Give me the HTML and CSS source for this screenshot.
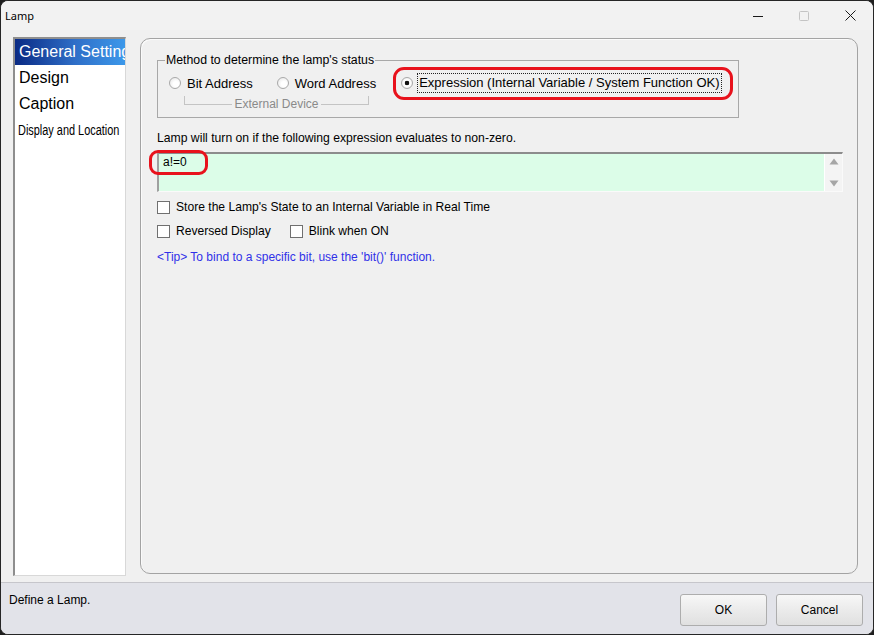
FILE: index.html
```html
<!DOCTYPE html>
<html>
<head>
<meta charset="utf-8">
<title>Lamp</title>
<link rel="stylesheet" href="styles.css">
</head>
<body>
<div class="window">
  <div class="titlebar">
    <span class="title">Lamp</span>
    <div class="controls">
      <span class="ctl"><svg width="10" height="10" viewBox="0 0 10 10"><path d="M0 5.5H10" stroke="#1a1a1a" stroke-width="1"/></svg></span>
      <span class="ctl"><svg width="10" height="10" viewBox="0 0 10 10"><rect x="0.5" y="0.5" width="9" height="9" rx="1" fill="none" stroke="#c4c4c4" stroke-width="1"/></svg></span>
      <span class="ctl"><svg width="11" height="11" viewBox="0 0 11 11"><path d="M0.5 0.5L10.5 10.5M10.5 0.5L0.5 10.5" stroke="#1a1a1a" stroke-width="1"/></svg></span>
    </div>
  </div>
  <div class="content">
    <ul class="sidebar">
      <li class="item selected">General Setting</li>
      <li class="item">Design</li>
      <li class="item">Caption</li>
      <li class="item narrow"><span class="squeeze">Display and Location</span></li>
    </ul>
    <div class="panel">
      <div class="group">
        <span class="legend">Method to determine the lamp's status</span>
        <div class="radios">
          <label class="radio"><span class="dot"></span>Bit Address</label>
          <label class="radio r2"><span class="dot"></span>Word Address</label>
          <label class="radio r3"><span class="dot checked"></span><span class="focus">Expression (Internal Variable / System Function OK)</span></label>
        </div>
        <div class="bracket"><span class="bl"></span><span class="btext">External Device</span><span class="br"></span></div>
      </div>
      <p class="hint">Lamp will turn on if the following expression evaluates to non-zero.</p>
      <div class="expr">
        <div class="expr-text"><span class="code">a!=0</span></div>
        <div class="vscroll">
          <svg width="10" height="7" viewBox="0 0 10 7"><path d="M5 0.5L9.5 6.5H0.5Z" fill="#a6a6a6"/></svg>
          <svg width="10" height="7" viewBox="0 0 10 7"><path d="M0.5 0.5H9.5L5 6.5Z" fill="#a6a6a6"/></svg>
        </div>
      </div>
      <div class="check-row first">
        <label class="check"><span class="box"></span>Store the Lamp's State to an Internal Variable in Real Time</label>
      </div>
      <div class="check-row">
        <label class="check"><span class="box"></span>Reversed Display</label>
        <label class="check c2"><span class="box"></span>Blink when ON</label>
      </div>
      <p class="tip">&lt;Tip&gt; To bind to a specific bit, use the 'bit()' function.</p>
    </div>
  </div>
  <div class="statusbar">
    <span class="status">Define a Lamp.</span>
    <div class="buttons">
      <button class="btn">OK</button>
      <button class="btn">Cancel</button>
    </div>
  </div>
</div>
</body>
</html>
```
FILE: styles.css
```css
*, *::before, *::after { box-sizing: border-box; }
html, body { margin: 0; padding: 0; background: #1e1e1e; }
body { width: 874px; height: 635px; overflow: hidden; }

.window {
  width: 874px; height: 635px;
  border: 1px solid #262626;
  border-radius: 8px;
  background: #f0f0f0;
  display: flex; flex-direction: column;
  overflow: hidden;
  font-family: "Liberation Sans", Arial, sans-serif;
  font-size: 12px;
  color: #000;
}

.titlebar { height: 29px; flex: none; display: flex; align-items: center; background: #f2f2f2; }
.title { font-family: "Noto Sans", sans-serif; font-size: 11px; padding-left: 4px; padding-bottom: 1px; color: #000; }
.controls { margin-left: auto; display: flex; height: 29px; }
.ctl { width: 46px; display: flex; align-items: center; justify-content: center; }

.content { flex: 1; display: flex; align-items: flex-start; padding: 7px 15px 0 12px; }

.sidebar {
  list-style: none; margin: 0; padding: 0;
  width: 113px; height: 539px; flex: none;
  background: #fff;
  border-top: 2px solid #8e8e8e; border-left: 2px solid #8e8e8e;
  border-right: 1px solid #d8d8d8; border-bottom: 1px solid #d8d8d8;
  overflow: hidden;
}
.item { height: 26px; line-height: 26px; font-size: 16px; padding-left: 4px; white-space: nowrap; color: #000; }
.item.selected { background: linear-gradient(to right, #0a2a84, #2f6fc8 55%, #3c98ea); color: #fff; }
.item.narrow { font-size: 14px; padding-left: 3px; }
.squeeze { display: inline-block; transform: scaleX(0.78); transform-origin: left center; }

.panel {
  flex: none; margin-left: 14px; margin-top: 1px;
  width: 718px; height: 536px;
  border: 1px solid #a3a3a3; border-radius: 10px;
  box-shadow: inset 1px 1px 0 #fafafa;
  padding: 21px 15px 0 16px;
}

.group {
  position: relative; width: 582px;
  border: 1px solid #a8a8a8;
  padding: 12px 0 5px 11px;
}
.legend {
  position: absolute; left: 7px; top: -8px;
  line-height: 15px; padding: 0 1px; background: #f0f0f0;
  font-size: 12.3px;
}
.radios { display: flex; align-items: center; height: 20px; font-size: 13px; }
.radio { display: flex; align-items: center; gap: 6px; }
.r2 { margin-left: 24px; }
.r3 { margin-left: 25px; gap: 4px; position: relative; }
.r3::after {
  content: ""; position: absolute; left: -8px; right: -11px; top: -6px; bottom: -7px;
  border: 3px solid #e8121c; border-radius: 11px;
}
.dot {
  width: 12px; height: 12px; border-radius: 50%;
  border: 1px solid #a9a9a9;
  background: radial-gradient(circle at 60% 60%, #ffffff 30%, #e2e2e2 100%);
  flex: none;
}
.dot.checked { background: radial-gradient(circle, #111 0 2px, #fff 2.6px, #fff 45%, #e2e2e2 100%); }
.focus { border: 1px dotted #222; line-height: 18px; padding: 0 1px; }

.bracket { display: flex; align-items: flex-start; margin: 3px 0 0 15px; width: 185px; height: 16px; }
.bl, .br { flex: 1; height: 9px; border-bottom: 1px solid #c4c4c4; }
.bl { border-left: 1px solid #c4c4c4; }
.br { border-right: 1px solid #c4c4c4; }
.btext { color: #8a8a8a; line-height: 17px; padding: 0 2px; }

.hint { margin: 13px 0 0; line-height: 14px; font-size: 12.2px; }

.expr {
  display: flex; margin-top: 7px;
  width: 686px; height: 40px;
  background: #dcfde8;
  border-top: 2px solid #8c8c8c; border-left: 2px solid #a0a0a0;
  border-right: 1px solid #fafafa; border-bottom: 1px solid #fafafa;
}
.expr-text { flex: 1; padding: 1px 4px; }
.code { position: relative; display: inline-block; vertical-align: top; line-height: 14px; font-size: 12px; }
.code::after {
  content: ""; position: absolute; left: -14px; top: -5px; width: 59px; height: 25px;
  border: 3px solid #e8121c; border-radius: 9px;
}
.vscroll {
  width: 18px; flex: none; background: #f4f4f4; border-left: 1px solid #ffffff;
  display: flex; flex-direction: column; align-items: center; justify-content: space-between;
  padding: 4px 0 4px;
}

.check-row { display: flex; align-items: center; height: 16px; margin-top: 8px; }
.check-row.first { margin-top: 7px; }
.check { display: flex; align-items: center; gap: 6px; font-size: 12.1px; }
.c2 { margin-left: 19px; }
.box { width: 13px; height: 13px; border: 1px solid #707070; background: #fff; flex: none; }

.tip { margin: 11px 0 0; line-height: 14px; font-size: 12px; color: #3030e8; }

.statusbar {
  flex: none; height: 52px;
  border-top: 1px solid #c6c6cb;
  background: #e2e3e9;
  display: flex; align-items: flex-start;
  padding: 9px 10px 0 8px;
}
.status { line-height: 16px; font-size: 12px; }
.buttons { margin-left: auto; margin-top: 2px; display: flex; gap: 9px; }
.btn {
  width: 87px; height: 32px;
  border: 1px solid #adadad; border-radius: 3px;
  background: linear-gradient(#f7f7f7, #ebebeb 50%, #e0e0e0);
  font-family: "Liberation Sans", Arial, sans-serif; font-size: 12px; color: #000;
  padding: 0;
}
```
